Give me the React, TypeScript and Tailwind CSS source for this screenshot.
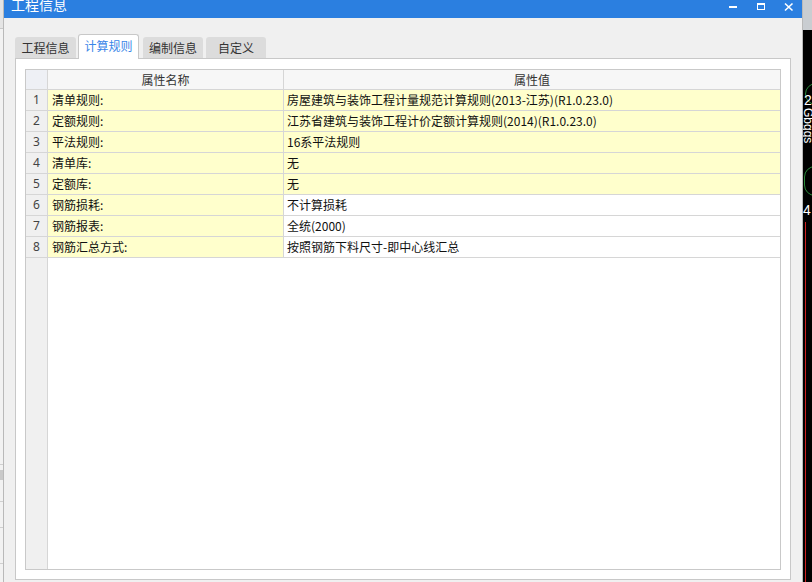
import React from 'react';

interface Row {
  name: string;
  value: string;
  valueYellow: boolean;
}

const rows: Row[] = [
  { name: '清单规则:', value: '房屋建筑与装饰工程计量规范计算规则(2013-江苏)(R1.0.23.0)', valueYellow: true },
  { name: '定额规则:', value: '江苏省建筑与装饰工程计价定额计算规则(2014)(R1.0.23.0)', valueYellow: true },
  { name: '平法规则:', value: '16系平法规则', valueYellow: true },
  { name: '清单库:', value: '无', valueYellow: true },
  { name: '定额库:', value: '无', valueYellow: true },
  { name: '钢筋损耗:', value: '不计算损耗', valueYellow: false },
  { name: '钢筋报表:', value: '全统(2000)', valueYellow: false },
  { name: '钢筋汇总方式:', value: '按照钢筋下料尺寸-即中心线汇总', valueYellow: false },
];

const tabs = [
  { label: '工程信息', active: false, cls: 'w-[61px]' },
  { label: '计算规则', active: true, cls: 'w-[61px] ml-[2px]' },
  { label: '编制信息', active: false, cls: 'w-[60px] ml-[4px]' },
  { label: '自定义', active: false, cls: 'w-[60px] ml-[3px]' },
];

function TitleBar() {
  return (
    <div className="h-[18px] bg-[#2b7fe0] flex items-start shrink-0 overflow-hidden">
      <span className="ml-[7px] -mt-[4px] text-white text-[14px] leading-[16px]">工程信息</span>
      <div className="ml-auto flex items-start h-full">
        <svg width="12" height="12" viewBox="0 0 12 12" className="mt-[2px]">
          <rect x="2" y="4" width="8" height="2" fill="#fff" />
        </svg>
        <svg width="12" height="12" viewBox="0 0 12 12" className="ml-[16px] mt-[2px]">
          <rect x="2.5" y="1.5" width="7" height="6" fill="none" stroke="#fff" />
          <rect x="2" y="1" width="8" height="2" fill="#fff" />
        </svg>
        <svg width="12" height="12" viewBox="0 0 12 12" className="ml-[16px] mt-[2px] mr-[7px]">
          <path d="M2 1.5 L9.5 8.5 M9.5 1.5 L2 8.5" stroke="#fff" strokeWidth="1.6" />
        </svg>
      </div>
    </div>
  );
}

function Tabs() {
  return (
    <div className="flex items-end h-[25px] relative z-10 -mb-px">
      {tabs.map((t) =>
        t.active ? (
          <div
            key={t.label}
            className={`${t.cls} h-[25px] bg-white border border-b-0 border-[#c8c8c8] rounded-t-[3px] text-[#3a86e8] text-[12px] flex items-center justify-center pb-[2px]`}
          >
            {t.label}
          </div>
        ) : (
          <div
            key={t.label}
            className={`${t.cls} h-[21px] mb-px bg-[#dcdcdc] rounded-t-[3px] text-[#333] text-[12px] flex items-center justify-center`}
          >
            {t.label}
          </div>
        )
      )}
    </div>
  );
}

function Grid() {
  return (
    <div className="flex-1 flex flex-col border border-[#c9c9c9] bg-white text-[12px]">
      <div className="h-[20px] flex border-b border-[#d6d6d6] shrink-0 text-[#333]">
        <div className="w-[22px] bg-[#eef0f5] border-r border-[#d6d6d6]" />
        <div className="w-[236px] bg-[#f7f7f7] border-r border-[#d6d6d6] flex items-center justify-center">属性名称</div>
        <div className="flex-1 bg-[#f7f7f7] flex items-center justify-center">属性值</div>
      </div>
      {rows.map((r, i) => (
        <div key={r.name} className="h-[21px] flex border-b border-[#d6d6d6] shrink-0">
          <div className="w-[22px] bg-[#f0f0f0] border-r border-[#d6d6d6] flex items-center justify-center text-[#444] font-['Noto_Sans','Liberation_Sans',sans-serif] text-[12px]">
            {i + 1}
          </div>
          <div className="w-[236px] bg-[#ffffcc] border-r border-[#d6d6d6] flex items-center pl-[4px] text-[#111]">
            {r.name}
          </div>
          <div className={`flex-1 flex items-center pl-[3px] text-[#111] ${r.valueYellow ? 'bg-[#ffffcc]' : 'bg-white'}`}>
            {r.value}
          </div>
        </div>
      ))}
      <div className="flex-1 flex">
        <div className="w-[22px] bg-[#f0f0f0] border-r border-[#d6d6d6]" />
        <div className="flex-1 bg-white" />
      </div>
    </div>
  );
}

export default function App() {
  return (
    <div className="w-[812px] h-[582px] flex overflow-hidden bg-[#f0f0f0] font-['Noto_Sans_CJK_SC','Noto_Sans',sans-serif]">
      <div className="w-[3px] shrink-0 flex flex-col bg-[#f2f2f2]">
        <div className="h-[29px] bg-[#e4e4e4] border-b border-[#c8c8c8]" />
        <div className="flex-1" />
        <div className="h-px bg-[#cfcfcf]" />
        <div className="h-[10px] bg-[#c9c9c9] mt-[5px]" />
        <div className="h-[22px] border-b border-[#cfcfcf]" />
        <div className="h-[26px] border-b border-[#cfcfcf]" />
        <div className="h-[36px] border-b border-[#cfcfcf]" />
        <div className="h-[18px]" />
      </div>
      <div className="w-[800px] shrink-0 flex flex-col border-l border-r border-[#b9b9b9] bg-[#f0f0f0]">
        <TitleBar />
        <div className="flex-1 flex flex-col pl-[11px] pr-[11px] pt-[16px] pb-[2px]">
          <Tabs />
          <div className="flex-1 flex flex-col border border-[#c8c8c8] bg-white pl-[9px] pr-[9px] pt-[10px] pb-[9px]">
            <Grid />
          </div>
        </div>
      </div>
      <div className="flex-1 flex flex-col bg-black relative overflow-hidden">
        <div className="h-[30px] bg-[#c9cdd1] shrink-0" />
        <div className="absolute left-[2px] top-[83px] w-[22px] h-[22px] rounded-full border border-[#2a8a3a]" />
        <div className="absolute left-[1px] top-[93px] text-white text-[14px] leading-[14px] font-['Liberation_Sans',sans-serif]">2</div>
        <div className="absolute left-[0px] top-[108px] w-[9px] h-[48px] overflow-hidden">
          <div className="origin-top-left rotate-90 translate-x-[10px] text-white text-[12px] leading-[10px] whitespace-nowrap font-['Liberation_Sans',sans-serif]">
            Gbggs
          </div>
        </div>
        <div className="absolute left-[1px] top-[166px] w-[22px] h-[30px] rounded-full border border-[#2a8a3a]" />
        <div className="absolute left-[0px] top-[203px] text-white text-[14px] leading-[14px] font-['Liberation_Sans',sans-serif]">4</div>
        <div className="absolute left-[2px] top-[222px] bottom-0 w-px bg-[#d02020]" />
      </div>
    </div>
  );
}
